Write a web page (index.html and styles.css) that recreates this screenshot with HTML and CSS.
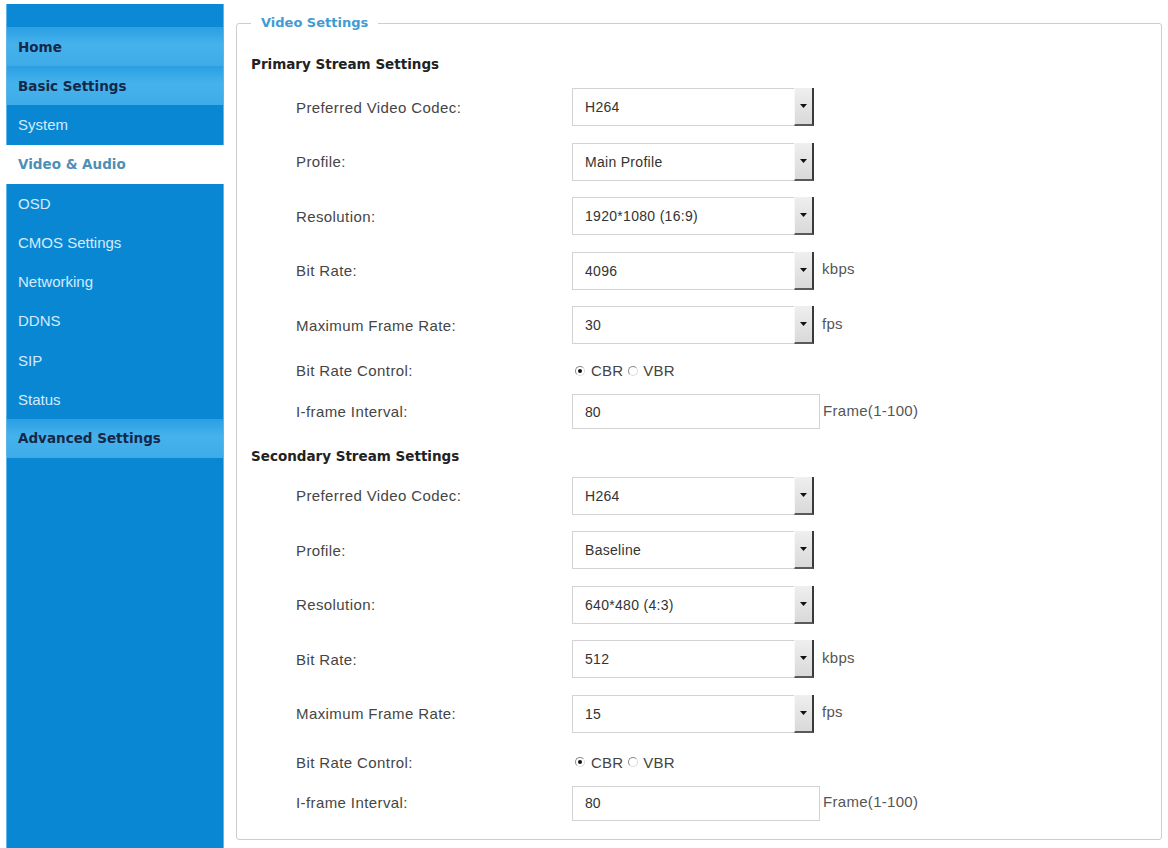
FILE: index.html
```html
<!DOCTYPE html>
<html lang="en">
<head>
<meta charset="utf-8">
<title>Video Settings</title>
<link rel="stylesheet" href="styles.css">
</head>
<body>
<div class="page">
  <nav class="sidebar">
    <div class="nav-top"></div>
    <a class="nav-item nav-group">Home</a>
    <a class="nav-item nav-group">Basic Settings</a>
    <a class="nav-item">System</a>
    <a class="nav-item nav-active">Video &amp; Audio</a>
    <a class="nav-item">OSD</a>
    <a class="nav-item">CMOS Settings</a>
    <a class="nav-item">Networking</a>
    <a class="nav-item">DDNS</a>
    <a class="nav-item">SIP</a>
    <a class="nav-item">Status</a>
    <a class="nav-item nav-group">Advanced Settings</a>
  </nav>
  <main class="content">
    <fieldset class="panel">
      <legend class="panel-legend">Video Settings</legend>

      <section class="stream stream-primary">
        <h2 class="stream-title">Primary Stream Settings</h2>
        <div class="row row-select">
          <span class="label">Preferred Video Codec:</span>
          <div class="select"><span class="select-value">H264</span><span class="select-btn"><svg class="caret" width="7" height="4" viewBox="0 0 7 4"><polygon points="0,0 7,0 3.5,4" fill="#111"/></svg></span></div>
        </div>
        <div class="row row-select">
          <span class="label">Profile:</span>
          <div class="select"><span class="select-value">Main Profile</span><span class="select-btn"><svg class="caret" width="7" height="4" viewBox="0 0 7 4"><polygon points="0,0 7,0 3.5,4" fill="#111"/></svg></span></div>
        </div>
        <div class="row row-select">
          <span class="label">Resolution:</span>
          <div class="select"><span class="select-value">1920*1080 (16:9)</span><span class="select-btn"><svg class="caret" width="7" height="4" viewBox="0 0 7 4"><polygon points="0,0 7,0 3.5,4" fill="#111"/></svg></span></div>
        </div>
        <div class="row row-select">
          <span class="label">Bit Rate:</span>
          <div class="select"><span class="select-value">4096</span><span class="select-btn"><svg class="caret" width="7" height="4" viewBox="0 0 7 4"><polygon points="0,0 7,0 3.5,4" fill="#111"/></svg></span></div>
          <span class="unit">kbps</span>
        </div>
        <div class="row row-select">
          <span class="label">Maximum Frame Rate:</span>
          <div class="select"><span class="select-value">30</span><span class="select-btn"><svg class="caret" width="7" height="4" viewBox="0 0 7 4"><polygon points="0,0 7,0 3.5,4" fill="#111"/></svg></span></div>
          <span class="unit">fps</span>
        </div>
        <div class="row row-radio">
          <span class="label">Bit Rate Control:</span>
          <div class="radios"><span class="radio radio-on"></span><span class="radio-text">CBR</span><span class="radio radio-off"></span><span class="radio-text">VBR</span></div>
        </div>
        <div class="row row-input">
          <span class="label">I-frame Interval:</span>
          <div class="textbox">80</div>
          <span class="unit unit-frame">Frame(1-100)</span>
        </div>
      </section>

      <section class="stream stream-secondary">
        <h2 class="stream-title">Secondary Stream Settings</h2>
        <div class="row row-select">
          <span class="label">Preferred Video Codec:</span>
          <div class="select"><span class="select-value">H264</span><span class="select-btn"><svg class="caret" width="7" height="4" viewBox="0 0 7 4"><polygon points="0,0 7,0 3.5,4" fill="#111"/></svg></span></div>
        </div>
        <div class="row row-select">
          <span class="label">Profile:</span>
          <div class="select"><span class="select-value">Baseline</span><span class="select-btn"><svg class="caret" width="7" height="4" viewBox="0 0 7 4"><polygon points="0,0 7,0 3.5,4" fill="#111"/></svg></span></div>
        </div>
        <div class="row row-select">
          <span class="label">Resolution:</span>
          <div class="select"><span class="select-value">640*480 (4:3)</span><span class="select-btn"><svg class="caret" width="7" height="4" viewBox="0 0 7 4"><polygon points="0,0 7,0 3.5,4" fill="#111"/></svg></span></div>
        </div>
        <div class="row row-select">
          <span class="label">Bit Rate:</span>
          <div class="select"><span class="select-value">512</span><span class="select-btn"><svg class="caret" width="7" height="4" viewBox="0 0 7 4"><polygon points="0,0 7,0 3.5,4" fill="#111"/></svg></span></div>
          <span class="unit">kbps</span>
        </div>
        <div class="row row-select">
          <span class="label">Maximum Frame Rate:</span>
          <div class="select"><span class="select-value">15</span><span class="select-btn"><svg class="caret" width="7" height="4" viewBox="0 0 7 4"><polygon points="0,0 7,0 3.5,4" fill="#111"/></svg></span></div>
          <span class="unit">fps</span>
        </div>
        <div class="row row-radio">
          <span class="label">Bit Rate Control:</span>
          <div class="radios"><span class="radio radio-on"></span><span class="radio-text">CBR</span><span class="radio radio-off"></span><span class="radio-text">VBR</span></div>
        </div>
        <div class="row row-input">
          <span class="label">I-frame Interval:</span>
          <div class="textbox">80</div>
          <span class="unit unit-frame">Frame(1-100)</span>
        </div>
      </section>
    </fieldset>
  </main>
</div>
</body>
</html>
```

FILE: styles.css
```css
* { box-sizing: border-box; }

html, body {
  margin: 0;
  padding: 0;
  background: #ffffff;
  height: 848px;
  overflow: hidden;
}

body {
  font-family: "Liberation Sans", Arial, sans-serif;
  color: #444;
}

.page {
  display: flex;
  align-items: flex-start;
}

/* ---------- Sidebar ---------- */
.sidebar {
  width: 218px;
  height: 844px;
  margin: 4px 0 0 6px;
  background: #0a87d3;
  border-left: 1px solid #5fb6ea;
  border-right: 1px solid #5fb6ea;
  display: flex;
  flex-direction: column;
}

.nav-top {
  height: 23px;
  background: #0b89d6;
}

.nav-item {
  height: 39.2px;
  display: flex;
  align-items: center;
  padding-left: 11px;
  font-size: 15px;
  color: #d3ebfc;
  text-decoration: none;
  background: #0a87d3;
}

.nav-group {
  font-family: "DejaVu Sans", Verdana, sans-serif;
  font-weight: bold;
  font-size: 13.5px;
  color: #16284a;
  background: linear-gradient(to bottom, #2a9fe3 0%, #46b2ec 45%, #3eabe8 100%);
}

.nav-active {
  font-family: "DejaVu Sans", Verdana, sans-serif;
  font-weight: bold;
  font-size: 13.5px;
  color: #4d8fb5;
  background: #ffffff;
  margin: 0 -1px;
  padding-left: 12px;
}

/* ---------- Content ---------- */
.content {
  margin: 13px 0 0 12px;
  width: 926px;
}

.panel {
  margin: 0;
  border: 1px solid #cdcdcd;
  border-radius: 3px;
  padding: 15px 14px 14px 14px;
  min-width: 0;
}

.panel-legend {
  padding: 0 10px;
  font-family: "DejaVu Sans", Verdana, sans-serif;
  font-weight: bold;
  font-size: 13px;
  line-height: 20px;
  color: #3f9bd3;
}

.stream-title {
  margin: 0;
  height: 32px;
  display: flex;
  align-items: center;
  font-family: "DejaVu Sans", Verdana, sans-serif;
  font-weight: bold;
  font-size: 13.5px;
  color: #222;
}

.stream-secondary .stream-title {
  height: 35px;
  padding-top: 9px;
}

.row {
  display: grid;
  grid-template-columns: 276px auto auto;
  justify-content: start;
  align-items: center;
  padding-left: 45px;
}

.row-select { height: 54.5px; }
.row-radio { height: 36px; }
.stream-secondary .row-radio { margin-top: 3px; }
.row-input { height: 45px; }

.label {
  font-size: 15px;
  letter-spacing: 0.4px;
  color: #454545;
}

.select {
  width: 242px;
  height: 38px;
  display: flex;
  border: 1px solid #d2d2d2;
  border-right: none;
  background: #fff;
}

.select-value {
  flex: 1;
  display: flex;
  align-items: center;
  padding-left: 12px;
  font-size: 14px;
  letter-spacing: 0.3px;
  color: #333;
}

.select-btn {
  width: 20px;
  margin-top: -1px;
  margin-bottom: -1px;
  display: flex;
  align-items: center;
  justify-content: center;
  background: linear-gradient(to bottom, #efefef, #d9d9d9);
  border-left: 1px solid #f8f8f8;
  border-right: 2px solid #3a3a3a;
  border-bottom: 2px solid #5a5a5a;
}

.unit {
  margin-left: 8px;
  font-size: 15px;
  letter-spacing: 0.3px;
  color: #555;
  margin-top: -4px;
}

.unit-frame {
  margin-left: 3px;
  margin-top: -2px;
}

.radios {
  display: flex;
  align-items: center;
  font-size: 15px;
  color: #444;
}

.radio {
  width: 10px;
  height: 10px;
  border-radius: 50%;
  border: 1px solid #dcdcdc;
  border-top-color: #8a8a8a;
  border-left-color: #8a8a8a;
  background: #fff;
  display: inline-flex;
  align-items: center;
  justify-content: center;
  margin-left: 3px;
  margin-right: 6px;
}

.radio-off {
  margin-left: 5px;
  margin-right: 5px;
}

.radio-on::after {
  content: "";
  width: 4px;
  height: 4px;
  border-radius: 50%;
  background: #111;
}

.radio-text { letter-spacing: 0.2px; }

.textbox {
  width: 248px;
  height: 35px;
  margin-top: 1px;
  display: flex;
  align-items: center;
  padding-left: 12px;
  border: 1px solid #d2d2d2;
  font-size: 14px;
  color: #333;
  background: #fff;
}
```
